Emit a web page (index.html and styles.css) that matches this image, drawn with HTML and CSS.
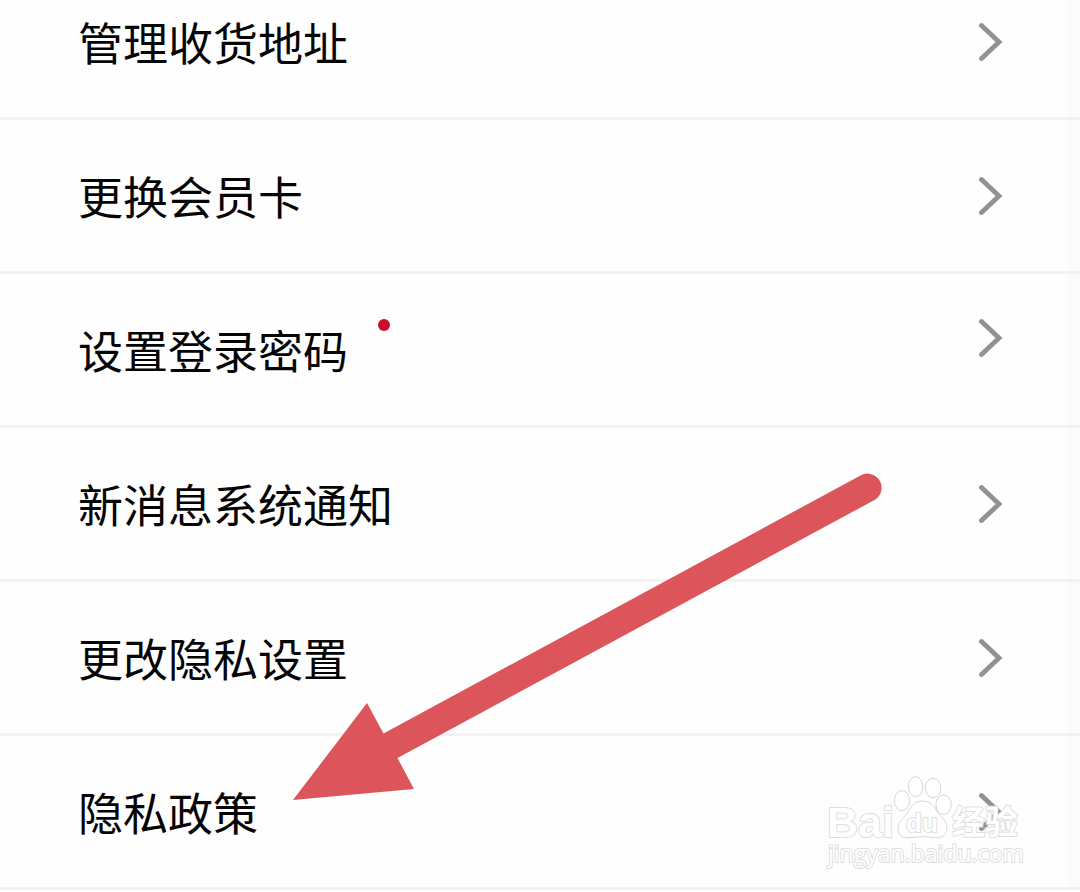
FILE: index.html
```html
<!DOCTYPE html>
<html lang="zh-CN">
<head>
<meta charset="utf-8">
<title>设置</title>
<link rel="stylesheet" href="styles.css">
</head>
<body>
<svg class="defs" width="0" height="0" aria-hidden="true">
  <symbol id="chevron" viewBox="0 0 24 40"><path d="M2.500 3.500 20 20 2.500 36.500" fill="none" stroke="#929292" stroke-width="4.800" stroke-linecap="round" stroke-linejoin="miter"/></symbol>
</svg>
<main class="screen">
  <nav class="menu" aria-label="设置">
    <a class="row row-first" href="#address"><span class="label">管理收货地址</span><svg class="chevron" aria-hidden="true"><use href="#chevron"/></svg></a>
    <a class="row" href="#card"><span class="label">更换会员卡</span><svg class="chevron" aria-hidden="true"><use href="#chevron"/></svg></a>
    <a class="row" href="#password"><span class="label">设置登录密码</span><span class="dot"></span><svg class="chevron chevron-top" aria-hidden="true"><use href="#chevron"/></svg></a>
    <a class="row" href="#notice"><span class="label">新消息系统通知</span><svg class="chevron" aria-hidden="true"><use href="#chevron"/></svg></a>
    <a class="row" href="#privacy-settings"><span class="label">更改隐私设置</span><svg class="chevron" aria-hidden="true"><use href="#chevron"/></svg></a>
    <a class="row" href="#privacy-policy"><span class="label">隐私政策</span><svg class="chevron" aria-hidden="true"><use href="#chevron"/></svg></a>
  </nav>
  <svg class="pointer" viewBox="0 0 600 340" aria-hidden="true">
    <path d="M3 330 77 233 93.500 263.500 570.500 5.500A14 14 0 0 1 584.500 30L107.500 288 124 319Z" fill="#db555b"/>
  </svg>
  <svg class="watermark" viewBox="0 0 200 110" role="img" aria-label="Baidu 经验">
    <g class="paw">
      <ellipse cx="76" cy="30.700" rx="7.700" ry="10"/>
      <ellipse cx="89.600" cy="16.700" rx="7.200" ry="10"/>
      <ellipse cx="107" cy="18" rx="7.700" ry="9.700"/>
      <ellipse cx="117.600" cy="34.700" rx="7.700" ry="9.700"/>
      <path d="M96.500 31C104 31 107 35 110 40C113 45 121 50 121 58C121 65 115 69 108 67.500C100 66.500 93 66.500 85 67.500C77 69 72 65 72 59C72 51 79 47 82 42C86 35 90 31 96.500 31Z"/>
    </g>
    <g class="mark">
      <text class="brand" x="1" y="67">Bai</text>
      <text class="du" x="80" y="62">du</text>
      <text class="cn" x="126" y="64">经验</text>
      <text class="site" x="2" y="92">jingyan.baidu.com</text>
    </g>
  </svg>
</main>
</body>
</html>
```
FILE: styles.css
```css
body {
  margin: 0;
  background: #fefefe;
  font-family: "Noto Sans CJK SC", "Liberation Sans", sans-serif;
  color: #050505;
}

.defs {
  position: absolute;
}

.screen {
  position: relative;
  background: linear-gradient(to left, #fbfbfb 12px, #fefefe 12px);
}

.menu {
  display: flex;
  flex-direction: column;
}

.row {
  display: flex;
  align-items: center;
  padding: 43px 77px 43px 78px;
  border-bottom: 3px solid #f2f2f2;
  color: inherit;
  text-decoration: none;
}

.row-first {
  padding-top: 9px;
}

.label {
  font-size: 45px;
  line-height: 65px;
}

.dot {
  align-self: flex-start;
  width: 12px;
  height: 12px;
  margin: 2px 0 0 30px;
  border-radius: 50%;
  background: #c8102e;
}

.chevron {
  width: 24px;
  height: 40px;
  margin-left: auto;
}

.chevron-top {
  align-self: flex-start;
  margin-top: 1px;
}

.pointer {
  position: absolute;
  left: 290px;
  top: 470px;
  width: 600px;
  height: 340px;
  pointer-events: none;
}

.watermark {
  position: absolute;
  left: 826px;
  top: 770px;
  width: 200px;
  height: 110px;
  pointer-events: none;
}

.paw {
  fill: #ffffff;
  fill-opacity: 0.7;
  stroke: #d6d6d6;
  stroke-width: 1;
}

.mark {
  fill: #ffffff;
  stroke: #dedede;
  stroke-width: 2;
  stroke-linejoin: round;
  paint-order: stroke;
}

.brand {
  font: bold 43px "Liberation Sans", sans-serif;
}

.du {
  font: bold 26px "Liberation Sans", sans-serif;
}

.cn {
  font: bold 33px "Noto Sans CJK SC", sans-serif;
}

.site {
  font: 23px "Open Sans", sans-serif;
}
```
